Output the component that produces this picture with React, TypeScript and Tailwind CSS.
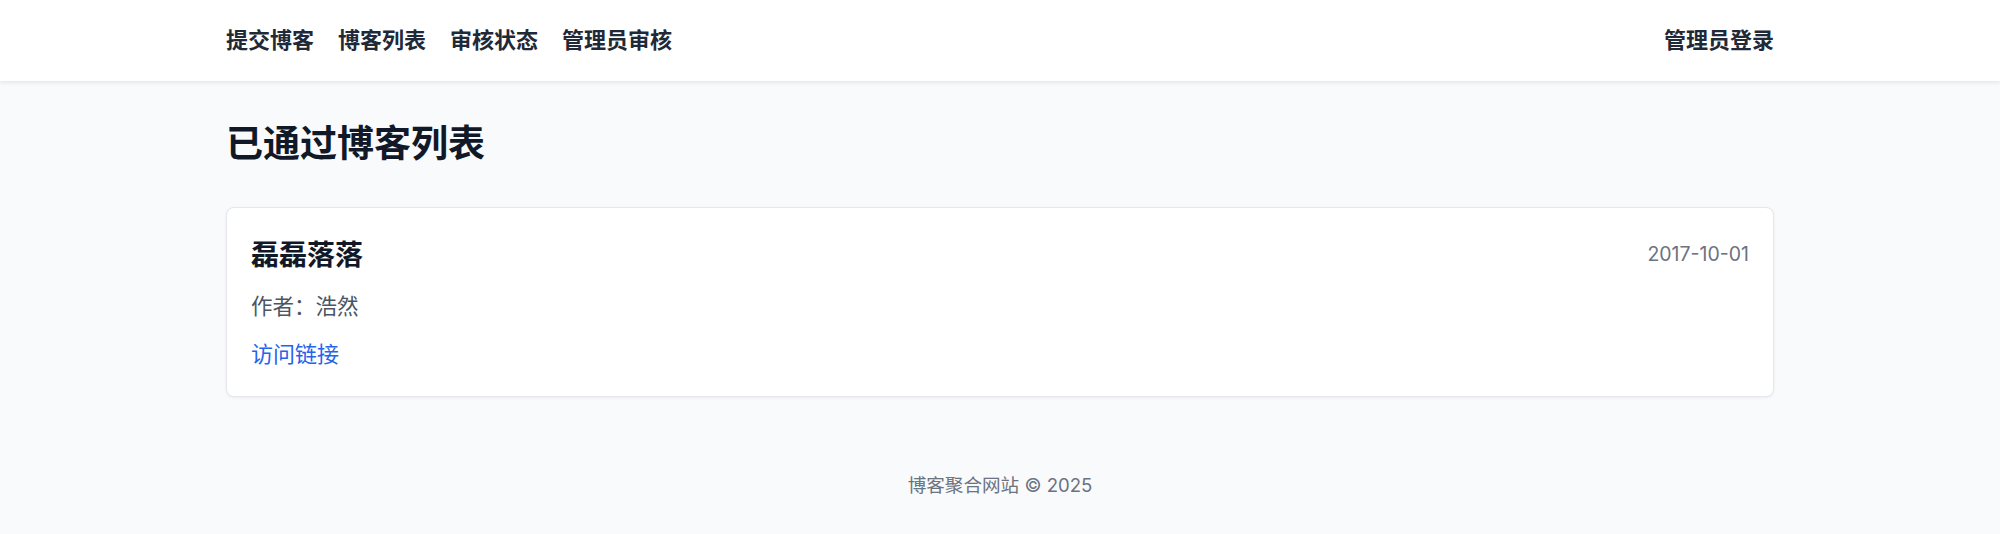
import React from "react"

const navItems = [
  { text: "提交博客", href: "#submit" },
  { text: "博客列表", href: "#list" },
  { text: "审核状态", href: "#status" },
  { text: "管理员审核", href: "#review" },
]

const blogs = [
  {
    title: "磊磊落落",
    author: "浩然",
    date: "2017-10-01",
    url: "#",
  },
]

const App = () => {
  return (
    <div className="min-h-screen bg-[#f9fafb] font-['Inter','Noto_Sans_CJK_SC',sans-serif]">
      {/* Navbar */}
      <header className="h-[81px] bg-white shadow-[0_2px_4px_rgba(0,0,0,0.08)]">
        <div className="mx-auto flex h-full w-[1548px] items-center justify-between">
          <nav className="flex items-center gap-[24px]">
            {navItems.map((item) => (
              <a key={item.href} href={item.href} className="text-[22px] font-semibold text-[#1f2937]">
                {item.text}
              </a>
            ))}
          </nav>
          <a href="#login" className="text-[22px] font-semibold text-[#1f2937]">
            管理员登录
          </a>
        </div>
      </header>

      <main className="mx-auto w-[1548px] pt-[40px] pb-[40px]">
        <h1 className="text-[37px] leading-[46px] font-bold text-[#111827]">已通过博客列表</h1>

        <div className="mt-[40px] flex flex-col gap-4">
          {blogs.map((blog) => (
            <div
              key={blog.title}
              className="rounded-[8px] border border-[#e5e7eb] bg-white px-[24px] pt-[24px] pb-[26px] shadow-[0_1px_3px_rgba(0,0,0,0.06)]"
            >
              <div className="flex h-[46px] items-center justify-between">
                <h2 className="text-[28px] font-bold text-[#111827]">{blog.title}</h2>
                <span className="text-[19.5px] text-[#6b7280]">{blog.date}</span>
              </div>
              <p className="mt-[13px] text-[21.5px] leading-[31px] text-[#4b5563]">作者：{blog.author}</p>
              <a href={blog.url} className="mt-[17px] block text-[22px] leading-[31px] text-[#2563eb]">
                访问链接
              </a>
            </div>
          ))}
        </div>
      </main>

      <footer className="py-[35px] text-center text-[18.6px] leading-[26px] text-[#6b7280]">
        博客聚合网站 © 2025
      </footer>
    </div>
  )
}

export default App
